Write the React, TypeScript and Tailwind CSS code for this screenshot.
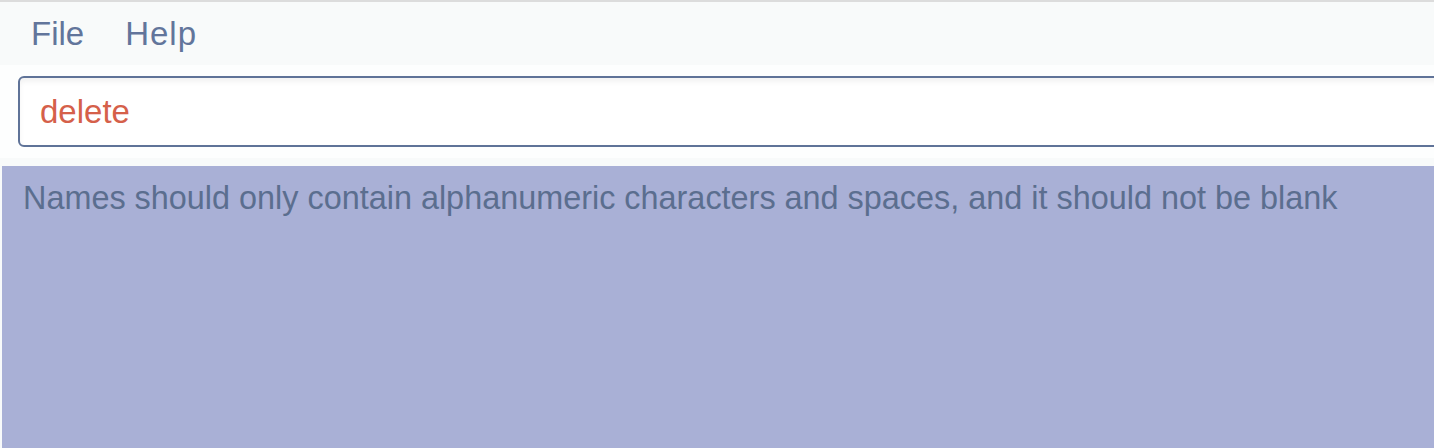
import React from "react";

export default function App() {
  const font = { fontFamily: '"Liberation Sans", Arial, sans-serif' };
  return (
    <div
      className="w-[1434px] h-[448px] overflow-hidden bg-[#f8fafa] flex flex-col border-t-2 border-[#dcdcdc]"
      style={font}
    >
      {/* menu bar */}
      <div className="h-[63px] shrink-0 flex items-start pt-[12px] pl-[31px] gap-[41px] text-[33px] leading-[40px] text-[#62759b]">
        <span>File</span>
        <span className="tracking-[1px]">Help</span>
      </div>
      {/* command box panel */}
      <div className="h-[93px] shrink-0 bg-[#fdfefe] pl-[18px] pt-[11px] -mr-[20px]">
        <div className="h-[71px] border-2 border-[#5f7398] rounded-[6px] bg-white shadow-[inset_0_4px_5px_rgba(0,0,0,0.05)] flex items-center pl-[20px] text-[33px] leading-[40px] text-[#d5604a]">
          delete
        </div>
      </div>
      {/* result display */}
      <div className="mt-[8px] ml-[2px] flex-1 bg-[#a9b0d6] pl-[21px] pt-[12px] text-[32.4px] leading-[40px] text-[#5b6e8f] whitespace-nowrap">
        Names should only contain alphanumeric characters and spaces, and it should not be blank
      </div>
    </div>
  );
}
